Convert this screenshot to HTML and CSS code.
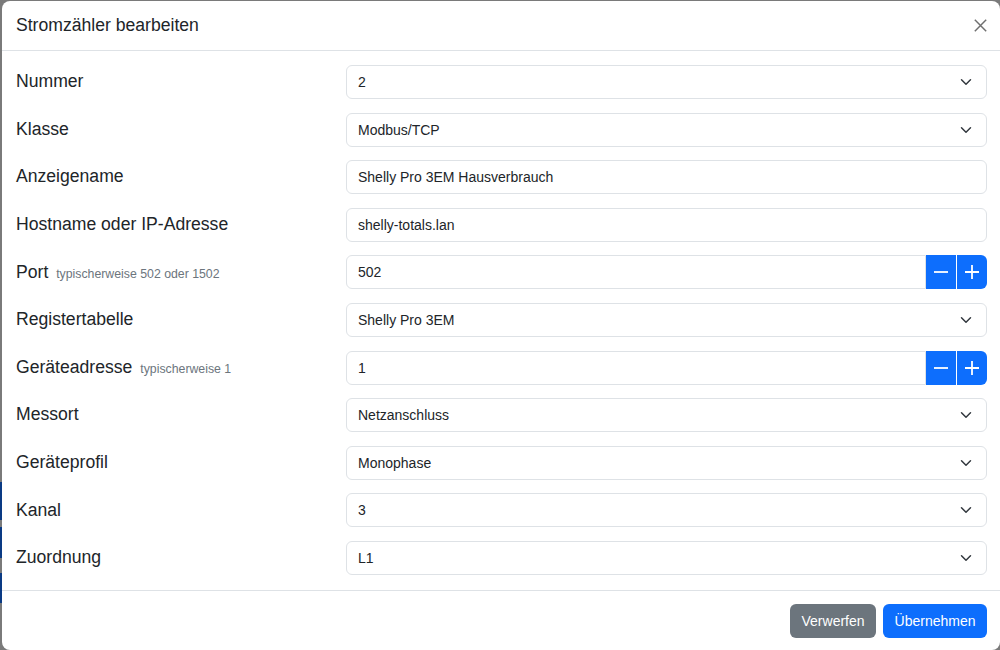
FILE: index.html
```html
<!DOCTYPE html>
<html lang="de">
<head>
    <meta charset="UTF-8">
    <meta name="viewport" content="width=device-width, initial-scale=1.0">
    <title>Stromzähler bearbeiten</title>
    <link rel="stylesheet" href="styles.css">
</head>
<body>
    <!-- the page behind the backdrop, only a sliver shows -->
    <div class="page-edge">
        <div class="edge-btn edge-btn-1"></div>
        <div class="edge-btn edge-btn-2"></div>
        <div class="edge-btn edge-btn-3"></div>
    </div>

    <div class="modal">
        <div class="modal-header">
            <h5 class="modal-title">Stromzähler bearbeiten</h5>
            <button class="btn-close" type="button" aria-label="Schließen">
                <svg width="13" height="13" viewBox="0 0 16 16">
                    <path d="M1 1 15 15M15 1 1 15" stroke="#6f6f6f" stroke-width="1.8" fill="none"/>
                </svg>
            </button>
        </div>

        <form class="modal-body" id="meterForm">
            <div class="form-row">
                <label for="nummer">Nummer</label>
                <select id="nummer" class="form-select">
                    <option>1</option>
                    <option selected>2</option>
                    <option>3</option>
                </select>
            </div>
            <div class="form-row">
                <label for="klasse">Klasse</label>
                <select id="klasse" class="form-select">
                    <option selected>Modbus/TCP</option>
                    <option>Modbus/RTU</option>
                </select>
            </div>
            <div class="form-row">
                <label for="anzeigename">Anzeigename</label>
                <input id="anzeigename" class="form-control" type="text" value="Shelly Pro 3EM Hausverbrauch">
            </div>
            <div class="form-row">
                <label for="hostname">Hostname oder IP-Adresse</label>
                <input id="hostname" class="form-control" type="text" value="shelly-totals.lan">
            </div>
            <div class="form-row">
                <label for="port">Port <small class="hint">typischerweise 502 oder 1502</small></label>
                <div class="input-group">
                    <input id="port" class="form-control" type="text" value="502">
                    <button class="btn-step" type="button" data-target="port" data-step="-1">
                        <svg width="16" height="16" viewBox="0 0 16 16"><path d="M1 8h14" stroke="#fff" stroke-width="1.8"/></svg>
                    </button>
                    <button class="btn-step" type="button" data-target="port" data-step="1">
                        <svg width="16" height="16" viewBox="0 0 16 16"><path d="M1 8h14M8 1v14" stroke="#fff" stroke-width="1.8"/></svg>
                    </button>
                </div>
            </div>
            <div class="form-row">
                <label for="register">Registertabelle</label>
                <select id="register" class="form-select">
                    <option selected>Shelly Pro 3EM</option>
                    <option>SDM630</option>
                </select>
            </div>
            <div class="form-row">
                <label for="adresse">Geräteadresse <small class="hint">typischerweise 1</small></label>
                <div class="input-group">
                    <input id="adresse" class="form-control" type="text" value="1">
                    <button class="btn-step" type="button" data-target="adresse" data-step="-1">
                        <svg width="16" height="16" viewBox="0 0 16 16"><path d="M1 8h14" stroke="#fff" stroke-width="1.8"/></svg>
                    </button>
                    <button class="btn-step" type="button" data-target="adresse" data-step="1">
                        <svg width="16" height="16" viewBox="0 0 16 16"><path d="M1 8h14M8 1v14" stroke="#fff" stroke-width="1.8"/></svg>
                    </button>
                </div>
            </div>
            <div class="form-row">
                <label for="messort">Messort</label>
                <select id="messort" class="form-select">
                    <option selected>Netzanschluss</option>
                    <option>Verbraucher</option>
                </select>
            </div>
            <div class="form-row">
                <label for="profil">Geräteprofil</label>
                <select id="profil" class="form-select">
                    <option selected>Monophase</option>
                    <option>Triphase</option>
                </select>
            </div>
            <div class="form-row">
                <label for="kanal">Kanal</label>
                <select id="kanal" class="form-select">
                    <option>1</option>
                    <option>2</option>
                    <option selected>3</option>
                </select>
            </div>
            <div class="form-row">
                <label for="zuordnung">Zuordnung</label>
                <select id="zuordnung" class="form-select">
                    <option selected>L1</option>
                    <option>L2</option>
                    <option>L3</option>
                </select>
            </div>
        </form>

        <div class="modal-footer">
            <button class="btn btn-secondary" type="button">Verwerfen</button>
            <button class="btn btn-primary" type="button">Übernehmen</button>
        </div>
    </div>

    <script>
        // +/- buttons next to the number fields
        document.querySelectorAll('.btn-step').forEach(btn => {
            btn.addEventListener('click', () => {
                const input = document.getElementById(btn.dataset.target);
                const value = parseInt(input.value, 10) || 0;
                input.value = Math.max(0, value + parseInt(btn.dataset.step, 10));
            });
        });
    </script>
</body>
</html>
```

FILE: styles.css
```css
* {
    box-sizing: border-box;
}

body {
    margin: 0;
    height: 650px;
    overflow: hidden;
    display: flex;
    align-items: flex-start;
    background-color: #7a7a7a;
    font-family: "Liberation Sans", Arial, sans-serif;
    color: #212529;
}

.page-edge {
    width: 2px;
    flex-shrink: 0;
    display: flex;
    flex-direction: column;
    padding-top: 482px;
}

.edge-btn {
    background-color: #0a3a84;
}

.edge-btn-1 {
    height: 38px;
}

.edge-btn-2 {
    height: 31px;
    margin-top: 7px;
}

.edge-btn-3 {
    height: 30px;
    margin-top: 15px;
}

.modal {
    width: 998px;
    flex-shrink: 0;
    margin-top: 1px;
    background-color: #fff;
    border-radius: 8px;
    display: flex;
    flex-direction: column;
}

.modal-header {
    height: 50px;
    display: flex;
    align-items: center;
    justify-content: space-between;
    padding: 0 12px 0 14px;
    border-bottom: 1px solid #dee2e6;
}

.modal-title {
    margin: 0;
    font-size: 17.6px;
    font-weight: 400;
    line-height: 1.5;
}

.btn-close {
    width: 16px;
    height: 16px;
    padding: 0;
    border: none;
    background: none;
    display: flex;
    align-items: center;
    justify-content: center;
    cursor: pointer;
}

.modal-body {
    margin: 0;
    padding: 14px 13px 15px 13px;
    display: flex;
    flex-direction: column;
    gap: 13.6px;
}

.form-row {
    display: grid;
    grid-template-columns: 331px 1fr;
    align-items: center;
}

.form-row label {
    font-size: 17.6px;
    line-height: 1.5;
    padding-left: 1px;
    margin-top: -1px;
}

.hint {
    font-size: 12.3px;
    color: #6c757d;
    margin-left: 3px;
}

.form-control,
.form-select {
    width: 100%;
    height: 34px;
    padding: 0 11px;
    font-family: inherit;
    font-size: 14px;
    color: #212529;
    background-color: #fff;
    border: 1px solid #dee2e6;
    border-radius: 6px;
    outline: none;
}

.form-select {
    appearance: none;
    -webkit-appearance: none;
    padding-right: 36px;
    background-image: url("data:image/svg+xml,%3csvg xmlns='http://www.w3.org/2000/svg' viewBox='0 0 16 16'%3e%3cpath fill='none' stroke='%23343a40' stroke-linecap='round' stroke-linejoin='round' stroke-width='2' d='m2 5 6 6 6-6'/%3e%3c/svg%3e");
    background-repeat: no-repeat;
    background-position: right 12px center;
    background-size: 16px 12px;
}

.input-group {
    display: flex;
    height: 34px;
}

.input-group .form-control {
    flex: 1;
    border-radius: 6px 0 0 6px;
}

.btn-step {
    width: 30px;
    height: 34px;
    padding: 0;
    border: none;
    background-color: #0d6efd;
    display: flex;
    align-items: center;
    justify-content: center;
    cursor: pointer;
}

.btn-step + .btn-step {
    margin-left: 1px;
    border-radius: 0 6px 6px 0;
}

.btn-step:hover {
    background-color: #0b5ed7;
}

.modal-footer {
    display: flex;
    justify-content: flex-end;
    gap: 7px;
    padding: 13px 13px 12px;
    border-top: 1px solid #dee2e6;
}

.btn {
    height: 34px;
    padding: 0 11.5px;
    border: none;
    border-radius: 6px;
    font-family: inherit;
    font-size: 14px;
    color: #fff;
    cursor: pointer;
}

.btn-secondary {
    background-color: #6c757d;
}

.btn-primary {
    background-color: #0d6efd;
}
```
